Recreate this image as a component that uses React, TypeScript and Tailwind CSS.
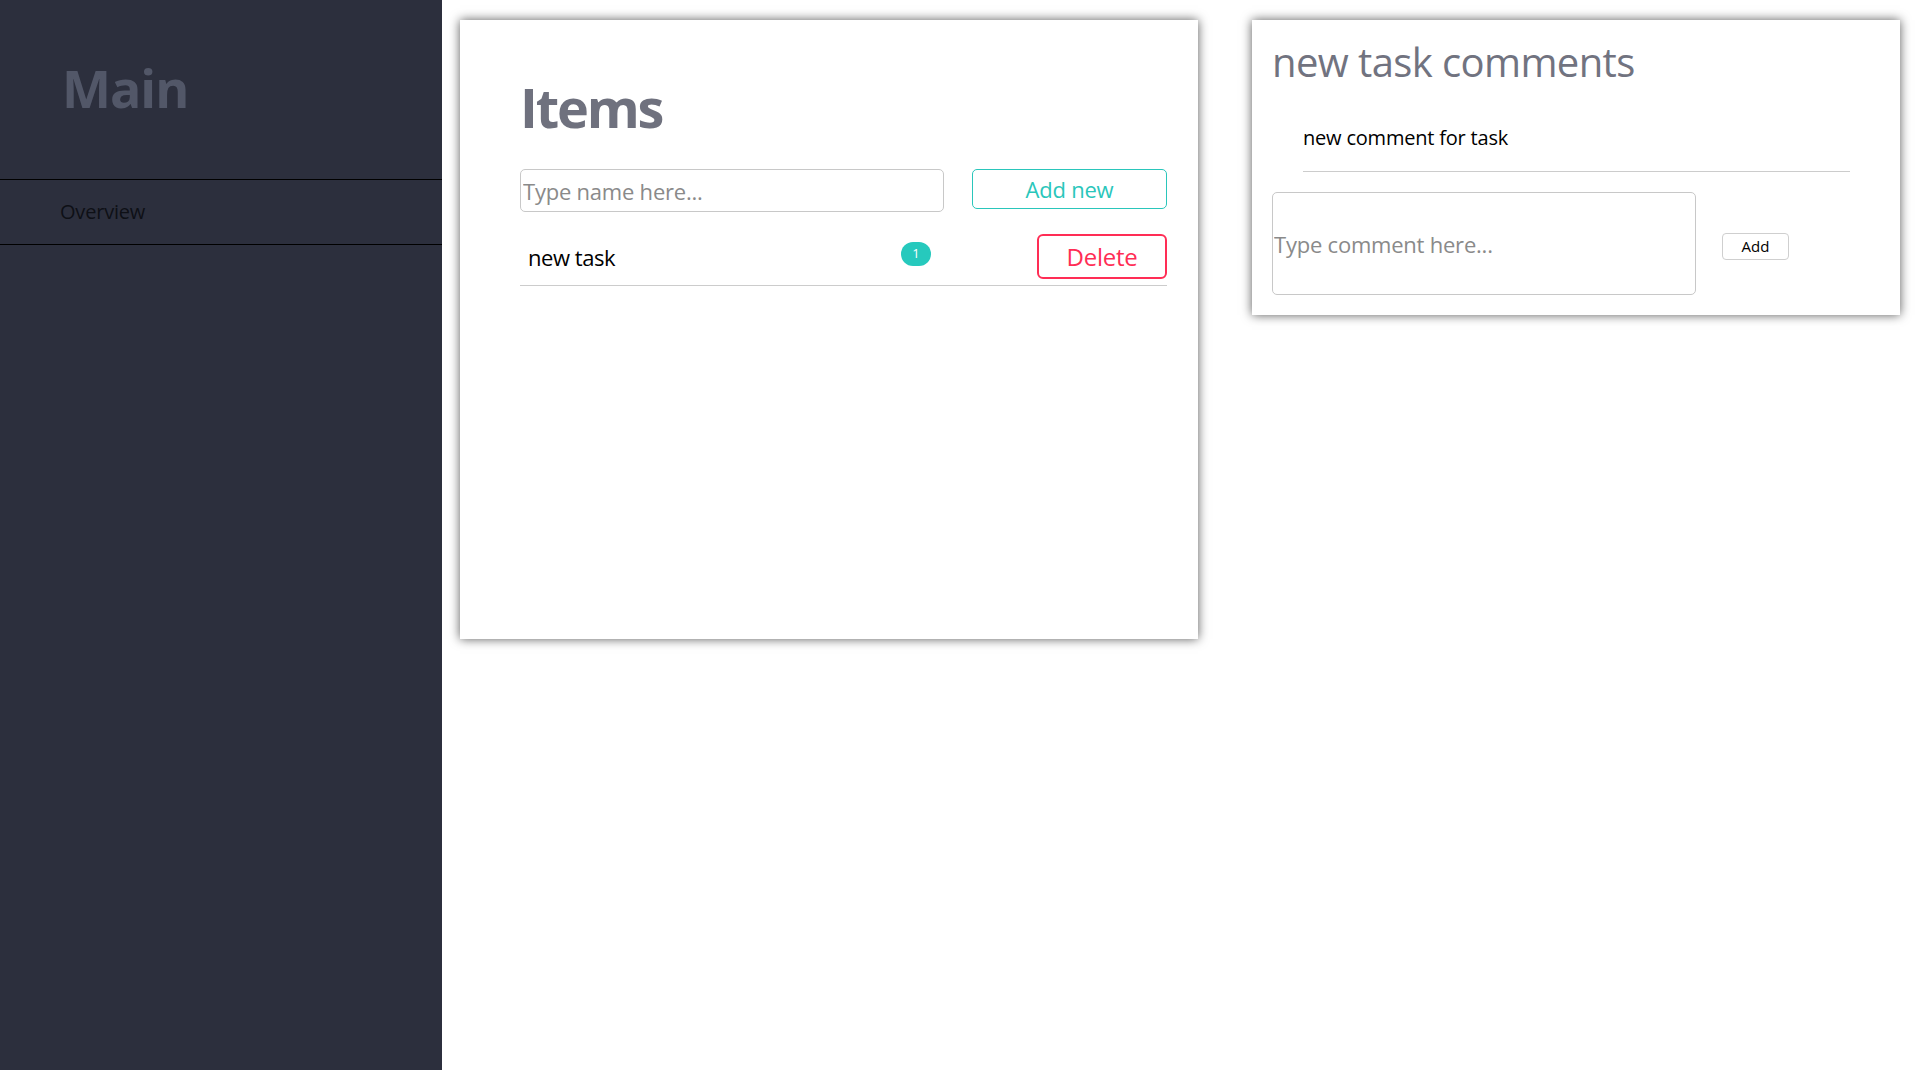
import React, { useState } from 'react';

const font = { fontFamily: '"Open Sans", "Noto Sans", sans-serif' };

const App: React.FC = () => {
  const [name, setName] = useState('');
  const [comment, setComment] = useState('');

  return (
    <div className="flex min-h-screen bg-white" style={font}>
      {/* Barra lateral */}
      <aside className="w-[442px] shrink-0 bg-[#2c2f3d] min-h-[1070px]">
        <div className="h-[179px] pl-[62px] pt-[62px]">
          <h1 className="text-[52px] font-bold leading-none tracking-[-0.02em] text-[#525768]">Main</h1>
        </div>
        <nav className="border-t border-b border-black">
          <div className="h-[64px] flex items-center pl-[60px] text-[20px] tracking-[-0.01em] text-[#0e1016]">Overview</div>
        </nav>
      </aside>

      <main className="flex items-start gap-[54px] pl-[18px] pt-5">
        {/* Lista de itens */}
        <section className="w-[738px] h-[619px] bg-white shadow-[0_0_10px_rgba(0,0,0,0.65)] pl-[60px] pr-[31px] pt-[60px]">
          <h2 className="text-[54px] font-bold leading-none tracking-[-0.04em] text-[#6f717e]">Items</h2>
          <div className="flex items-start mt-[35px]">
            <input
              value={name}
              onChange={e => setName(e.target.value)}
              placeholder="Type name here..."
              className="w-[424px] h-[43px] border border-[#c8c8c8] rounded-[5px] px-[2px] text-[22px] tracking-[-0.01em] placeholder:text-[#8a8a8a] outline-none"
            />
            <button className="ml-[28px] w-[195px] h-[40px] border border-[#2ac6bb] rounded-[5px] text-[22px] tracking-[-0.01em] text-[#2ac6bb] leading-none">
              Add new
            </button>
          </div>
          <div className="flex items-center mt-[22px] pb-[6px] border-b border-[#cccccc]">
            <span className="w-[381px] pl-[8px] text-[22px] tracking-[-0.02em] text-black leading-none">new task</span>
            <span className="w-[30px] h-[24px] -mt-[6px] rounded-full bg-[#26c9bd] text-white text-[13px] flex items-center justify-center leading-none">1</span>
            <button className="ml-auto w-[130px] h-[45px] border-2 border-[#ff2d55] rounded-[6px] text-[24px] tracking-[-0.01em] text-[#ff2d55] leading-none">
              Delete
            </button>
          </div>
        </section>

        {/* Comentários */}
        <section className="w-[648px] h-[295px] bg-white shadow-[0_0_10px_rgba(0,0,0,0.65)] pl-[20px] pt-[22px]">
          <h2 className="text-[40px] leading-none tracking-[-0.015em] text-[#717380]">new task comments</h2>
          <ul className="ml-[31px] w-[547px] mt-[46px]">
            <li className="text-[20px] leading-none tracking-[-0.01em] text-black pb-[23px] border-b border-[#cccccc]">new comment for task</li>
          </ul>
          <div className="flex items-center mt-[20px]">
            <input
              value={comment}
              onChange={e => setComment(e.target.value)}
              placeholder="Type comment here..."
              className="w-[424px] h-[103px] border border-[#c8c8c8] rounded-[5px] px-[1px] text-[22px] tracking-[-0.01em] placeholder:text-[#8a8a8a] outline-none"
            />
            <button className="ml-[26px] mt-[6px] w-[67px] h-[27px] border border-[#cfcfcf] rounded-[4px] text-[15px] text-black leading-none">
              Add
            </button>
          </div>
        </section>
      </main>
    </div>
  );
};

export default App;
